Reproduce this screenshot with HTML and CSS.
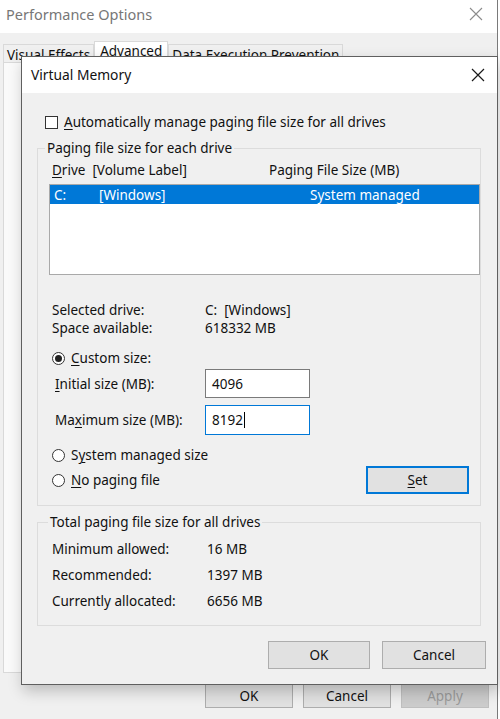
FILE: index.html
```html
<!DOCTYPE html>
<html>
<head>
<meta charset="utf-8">
<title>Virtual Memory</title>
<link rel="stylesheet" href="styles.css">
</head>
<body>
<div class="bgwin">
  <header class="bg-title">
    <span>Performance Options</span>
    <svg class="xicon" width="14" height="14" viewBox="0 0 14 14"><path d="M1 1L13 13M13 1L1 13" stroke="#8c8c8c" stroke-width="1.1" fill="none"/></svg>
  </header>
  <div class="bg-body">
    <div class="tabs">
      <div class="tab first">Visual Effects</div>
      <div class="tab active">Advanced</div>
      <div class="tab last">Data Execution Prevention</div>
    </div>
    <div class="panel"></div>
    <div class="bg-buttons">
      <button class="btn bgbtn">OK</button>
      <button class="btn bgbtn">Cancel</button>
      <button class="btn bgbtn disabled">Apply</button>
    </div>
  </div>
</div>

<section class="dialog">
  <header class="dlg-title">
    <span>Virtual Memory</span>
    <svg class="xicon" width="14" height="14" viewBox="0 0 14 14"><path d="M1 1L13 13M13 1L1 13" stroke="#1a1a1a" stroke-width="1.2" fill="none"/></svg>
  </header>
  <div class="dlg-body">
    <div class="check"><span class="box"></span><span><u>A</u>utomatically manage paging file size for all drives</span></div>

    <fieldset class="group g1">
      <legend>Paging file size for each drive</legend>
      <div class="cols"><span><u>D</u>rive&nbsp; [Volume Label]</span><span>Paging File Size (MB)</span></div>
      <div class="list">
        <div class="row sel"><span>C:</span><span>[Windows]</span><span>System managed</span></div>
      </div>
      <div class="info">
        <span>Selected drive:</span><span>C:&nbsp; [Windows]</span>
        <span>Space available:</span><span>618332 MB</span>
      </div>
      <div class="radio"><span class="dot on"></span><span><u>C</u>ustom size:</span></div>
      <div class="field"><span class="flabel"><u>I</u>nitial size (MB):</span><div class="input">4096</div></div>
      <div class="field f2"><span class="flabel">Ma<u>x</u>imum size (MB):</span><div class="input focus">8192<span class="caret"></span></div></div>
      <div class="radio r2"><span class="dot"></span><span>S<u>y</u>stem managed size</span></div>
      <div class="setrow">
        <div class="radio"><span class="dot"></span><span><u>N</u>o paging file</span></div>
        <button class="btn set"><u>S</u>et</button>
      </div>
    </fieldset>

    <fieldset class="group g2">
      <legend>Total paging file size for all drives</legend>
      <div class="totals">
        <span>Minimum allowed:</span><span>16 MB</span>
        <span>Recommended:</span><span>1397 MB</span>
        <span>Currently allocated:</span><span>6656 MB</span>
      </div>
    </fieldset>

    <div class="dlg-buttons">
      <button class="btn ok">OK</button>
      <button class="btn cancel">Cancel</button>
    </div>
  </div>
</section>
</body>
</html>
```

FILE: styles.css
```css
* { box-sizing: border-box; }
html, body { margin: 0; padding: 0; }
body {
  width: 500px;
  height: 719px;
  overflow: hidden;
  position: relative;
  background: #ffffff;
  font-family: "Segoe UI", "Noto Sans", sans-serif;
  font-size: 13.5px;
  line-height: 18px;
  color: #111;
}
u { text-decoration: underline; text-underline-offset: 2px; text-decoration-thickness: 1px; }

/* background window */
.bgwin {
  width: 498px;
  height: 719px;
  display: flex;
  flex-direction: column;
  border-right: 1px solid #7a7a7a;
}
.bg-title {
  height: 33px;
  background: #fff;
  display: flex;
  align-items: center;
  justify-content: space-between;
  padding: 0 14px 6px 6px;
  color: #777;
  font-size: 14.5px;
}
.bg-body {
  flex: 1;
  background: #f0f0f0;
  display: flex;
  flex-direction: column;
  padding: 0 0 0 3px;
}
.tabs {
  display: flex;
  align-items: flex-end;
  height: 29px;
}
.tab {
  height: 18px;
  border: 1px solid #d9d9d9;
  border-bottom: none;
  padding: 0 3px;
  font-size: 13.5px;
  line-height: 20px;
  background: #f0f0f0;
  white-space: nowrap;
}
.tab.active { height: 21px; background: #fff; padding: 0 5px; line-height: 18px; }
.panel {
  height: 611px;
  background: #fafafa;
  border: 1px solid #d9d9d9;
}
.bg-buttons {
  display: flex;
  justify-content: flex-end;
  gap: 10px;
  padding: 11px 8px 0 0;
}

.btn {
  font: inherit;
  color: #111;
  background: #e1e1e1;
  border: 1px solid #adadad;
  padding: 0;
}
.bgbtn { width: 88px; height: 24px; }
.btn.disabled { background: #cccccc; color: #9a9a9a; border-color: #bfbfbf; }

/* dialog */
.dialog {
  position: absolute;
  left: 21px;
  top: 56px;
  width: 477px;
  height: 629px;
  border: 1px solid #5f5f5f;
  background: #f0f0f0;
  box-shadow: 2px 6px 14px rgba(0,0,0,0.22);
  display: flex;
  flex-direction: column;
}
.dlg-title {
  height: 36px;
  background: #fff;
  display: flex;
  align-items: center;
  justify-content: space-between;
  padding: 0 12px 0 9px;
  font-size: 13.8px;
}
.dlg-body {
  padding: 0 16px 0 15px;
  display: flex;
  flex-direction: column;
}
.check {
  display: flex;
  align-items: center;
  gap: 6px;
  margin: 20px 0 0 8px;
  height: 18px;
}
.box {
  width: 13px;
  height: 13px;
  border: 1px solid #333;
  background: #fff;
}

.group {
  margin: 0;
  border: 1px solid #dcdcdc;
  padding: 0 0 0 11px;
  min-width: 0;
}
.group legend {
  padding: 0 2px;
  margin-left: -4px;
  line-height: 18px;
}
.g1 { margin-top: 8px; padding-bottom: 11px; }
.cols {
  display: grid;
  grid-template-columns: 217px auto;
  margin: 4px 0 0 3px;
}
.list {
  margin-top: 5px;
  height: 91px;
  border: 1px solid #a9a9a9;
  background: #fff;
  padding: 0;
}
.row {
  display: grid;
  grid-template-columns: 45px 211px auto;
  height: 19px;
  line-height: 20px;
  padding-left: 4px;
}
.row.sel { background: #0078d7; color: #fff; }

.info {
  display: grid;
  grid-template-columns: 153px auto;
  margin: 26px 0 0 3px;
}
.radio {
  display: flex;
  align-items: center;
  gap: 6px;
  height: 18px;
  margin: 12px 0 0 3px;
}
.dot {
  width: 13px;
  height: 13px;
  border: 1px solid #333;
  border-radius: 50%;
  background: #fff;
  display: flex;
  align-items: center;
  justify-content: center;
}
.dot.on::after {
  content: "";
  width: 7px;
  height: 7px;
  border-radius: 50%;
  background: #222;
}
.field {
  display: grid;
  grid-template-columns: 150px 105px;
  align-items: center;
  margin: 2px 0 0 6px;
}
.field.f2 { margin-top: 7px; }
.input {
  height: 29px;
  background: #fff;
  border: 1px solid #7a7a7a;
  padding: 0 6px;
  display: flex;
  align-items: center;
}
.input.focus { border-color: #0078d7; height: 30px; }
.caret {
  display: inline-block;
  width: 1px;
  height: 16px;
  background: #000;
  margin-left: 1px;
}
.r2 { margin-top: 11px; }
.setrow {
  display: flex;
  align-items: center;
  justify-content: space-between;
  margin-top: 2px;
  padding-right: 11px;
}
.setrow .radio { margin-top: 0; }
.set {
  width: 103px;
  height: 28px;
  border: 2px solid #0078d7;
}

.g2 { margin-top: 7px; padding: 0 0 15px 14px; }
.totals {
  display: grid;
  grid-template-columns: 155px auto;
  row-gap: 8px;
  margin-top: 9px;
}

.dlg-buttons {
  display: flex;
  justify-content: flex-end;
  gap: 12px;
  margin-top: 15px;
  margin-right: -5px;
}
.ok { width: 102px; height: 28px; }
.cancel { width: 104px; height: 28px; }
```
